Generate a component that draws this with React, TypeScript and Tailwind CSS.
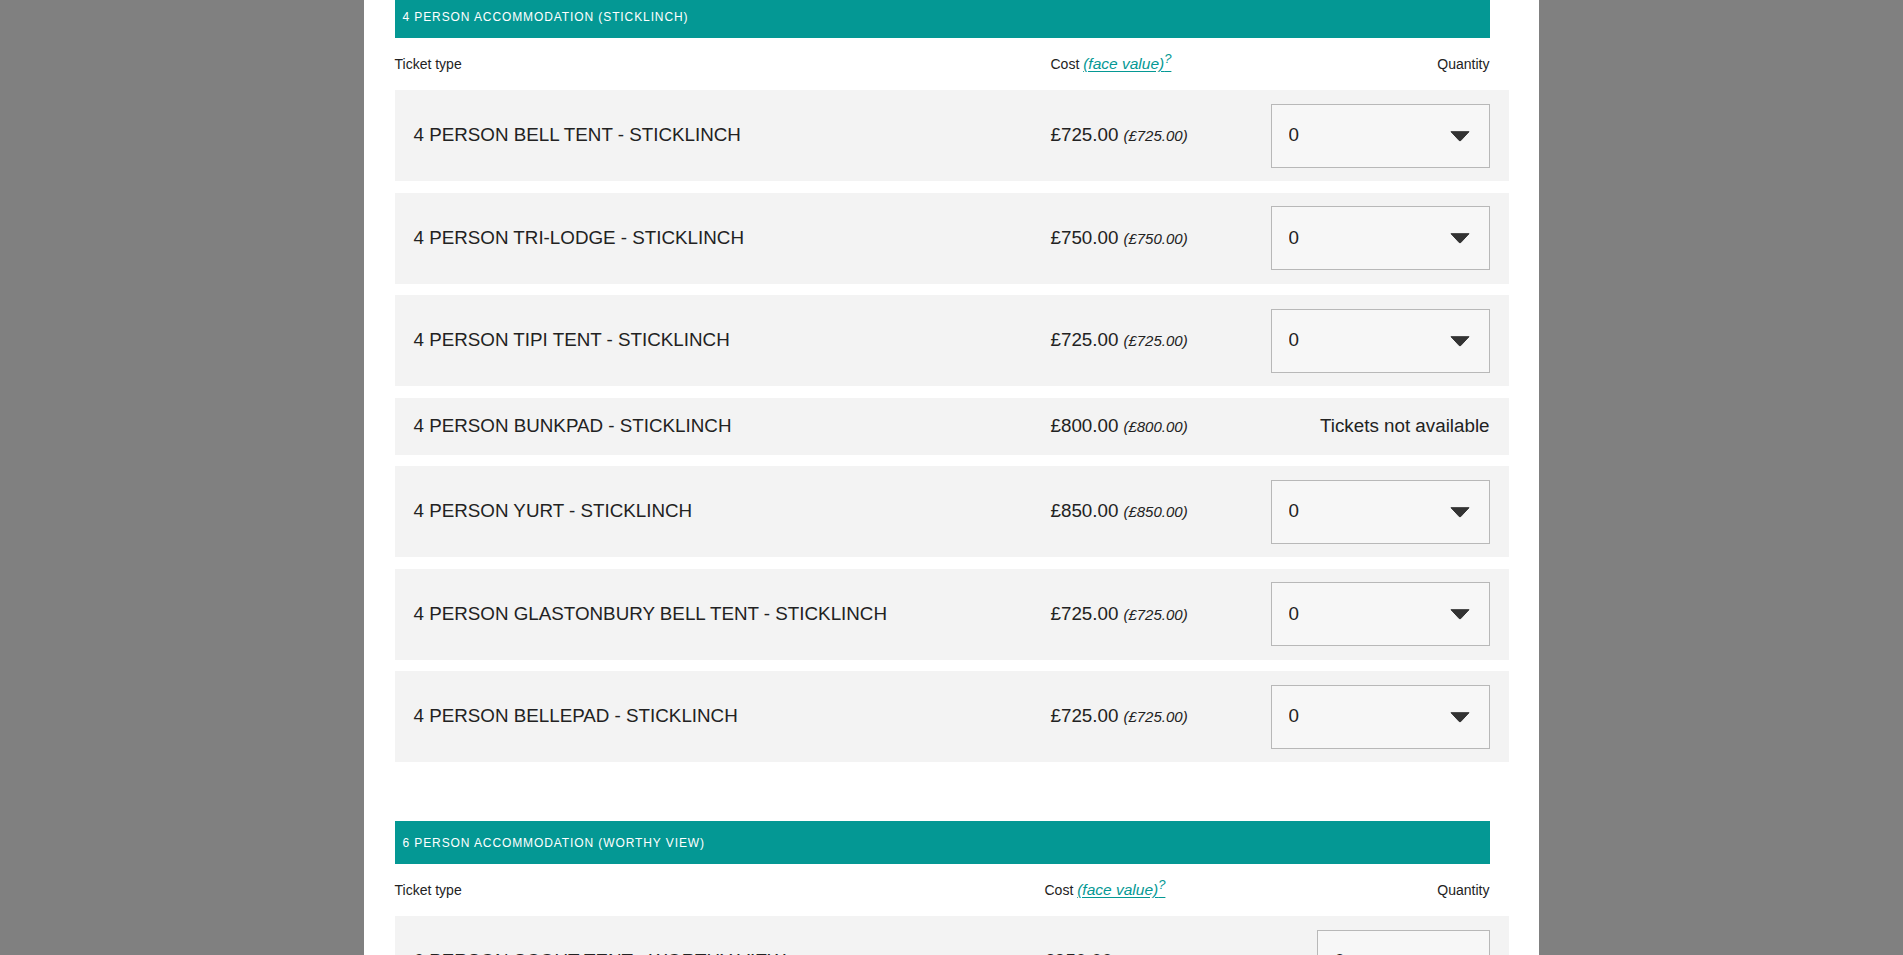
import React from 'react';

type Ticket = {
  name: string;
  price: string;
  available?: boolean;
};

type Section = {
  title: string;
  costOffset: number;
  selectWidth: number;
  tickets: Ticket[];
};

const SECTIONS: Section[] = [
  {
    title: '4 Person Accommodation (Sticklinch)',
    costOffset: 656,
    selectWidth: 219,
    tickets: [
      { name: '4 PERSON BELL TENT - STICKLINCH', price: '£725.00' },
      { name: '4 PERSON TRI-LODGE - STICKLINCH', price: '£750.00' },
      { name: '4 PERSON TIPI TENT - STICKLINCH', price: '£725.00' },
      { name: '4 PERSON BUNKPAD - STICKLINCH', price: '£800.00', available: false },
      { name: '4 PERSON YURT - STICKLINCH', price: '£850.00' },
      { name: '4 PERSON GLASTONBURY BELL TENT - STICKLINCH', price: '£725.00' },
      { name: '4 PERSON BELLEPAD - STICKLINCH', price: '£725.00' },
    ],
  },
  {
    title: '6 Person Accommodation (Worthy View)',
    costOffset: 650,
    selectWidth: 173,
    tickets: [
      { name: '6 PERSON SCOUT TENT - WORTHY VIEW', price: '£950.00' },
      { name: '6 PERSON BELL TENT - WORTHY VIEW', price: '£1,050.00' },
    ],
  },
];

function QuantitySelect({ width }: { width: number }) {
  return (
    <div className="relative h-[64px]" style={{ width }}>
      <select
        defaultValue="0"
        className="h-full w-full appearance-none rounded-none border border-[#b8b8b8] bg-[#f7f7f7] pl-[17px] text-[18.8px] text-[#222] outline-none font-['Liberation_Sans',Arial,sans-serif]"
      >
        {[0, 1, 2, 3, 4].map((n) => (
          <option key={n} value={n}>
            {n}
          </option>
        ))}
      </select>
      <svg
        className="pointer-events-none absolute right-[20px] top-1/2 -translate-y-1/2"
        width="20"
        height="11"
        viewBox="0 0 20 11"
      >
        <path d="M1 1.2 H19 L10.6 10.2 Q10 10.8 9.4 10.2 Z" fill="#333" stroke="#333" strokeWidth="1" strokeLinejoin="round" />
      </svg>
    </div>
  );
}

function TicketRow({ ticket, section }: { ticket: Ticket; section: Section }) {
  const available = ticket.available !== false;
  return (
    <div
      className={`flex items-center bg-[#f3f3f3] px-[19px] text-[18.8px] text-[#222] ${
        available ? 'h-[91px]' : 'h-[57px]'
      }`}
    >
      <div className="shrink-0" style={{ width: section.costOffset - 19 }}>
        {ticket.name}
      </div>
      <div className="flex-1 whitespace-nowrap">
        {ticket.price}
        <span className="ml-[5px] text-[15px] italic">({ticket.price})</span>
      </div>
      {available ? (
        <QuantitySelect width={section.selectWidth} />
      ) : (
        <div className="text-right">Tickets not available</div>
      )}
    </div>
  );
}

function TicketSection({ section }: { section: Section }) {
  return (
    <section>
      <div className="mr-[19px] flex h-[43px] items-center bg-[#049894] px-2 text-[12px] uppercase tracking-[0.9px] text-white">
        {section.title}
      </div>
      <div className="mr-[19px] flex h-[52px] items-center text-[14px] text-[#222]">
        <div className="shrink-0" style={{ width: section.costOffset }}>
          Ticket type
        </div>
        <div className="flex-1">
          Cost{' '}
          <a href="#" className="text-[15.5px] italic text-[#049894] underline underline-offset-2">
            (face value)<sup className="text-[13px]">?</sup>
          </a>
        </div>
        <div className="text-right">Quantity</div>
      </div>
      <div className="flex flex-col gap-[11.5px]">
        {section.tickets.map((t) => (
          <TicketRow key={t.name} ticket={t} section={section} />
        ))}
      </div>
    </section>
  );
}

export default function App() {
  return (
    <div className="flex h-screen justify-center overflow-hidden bg-[#808080] font-['Liberation_Sans',Arial,sans-serif]">
      <div className="h-full w-[1175px] bg-white px-[30.5px]">
        <div className="-mt-[5px] flex flex-col gap-[59px]">
          {SECTIONS.map((s) => (
            <TicketSection key={s.title} section={s} />
          ))}
        </div>
      </div>
    </div>
  );
}
